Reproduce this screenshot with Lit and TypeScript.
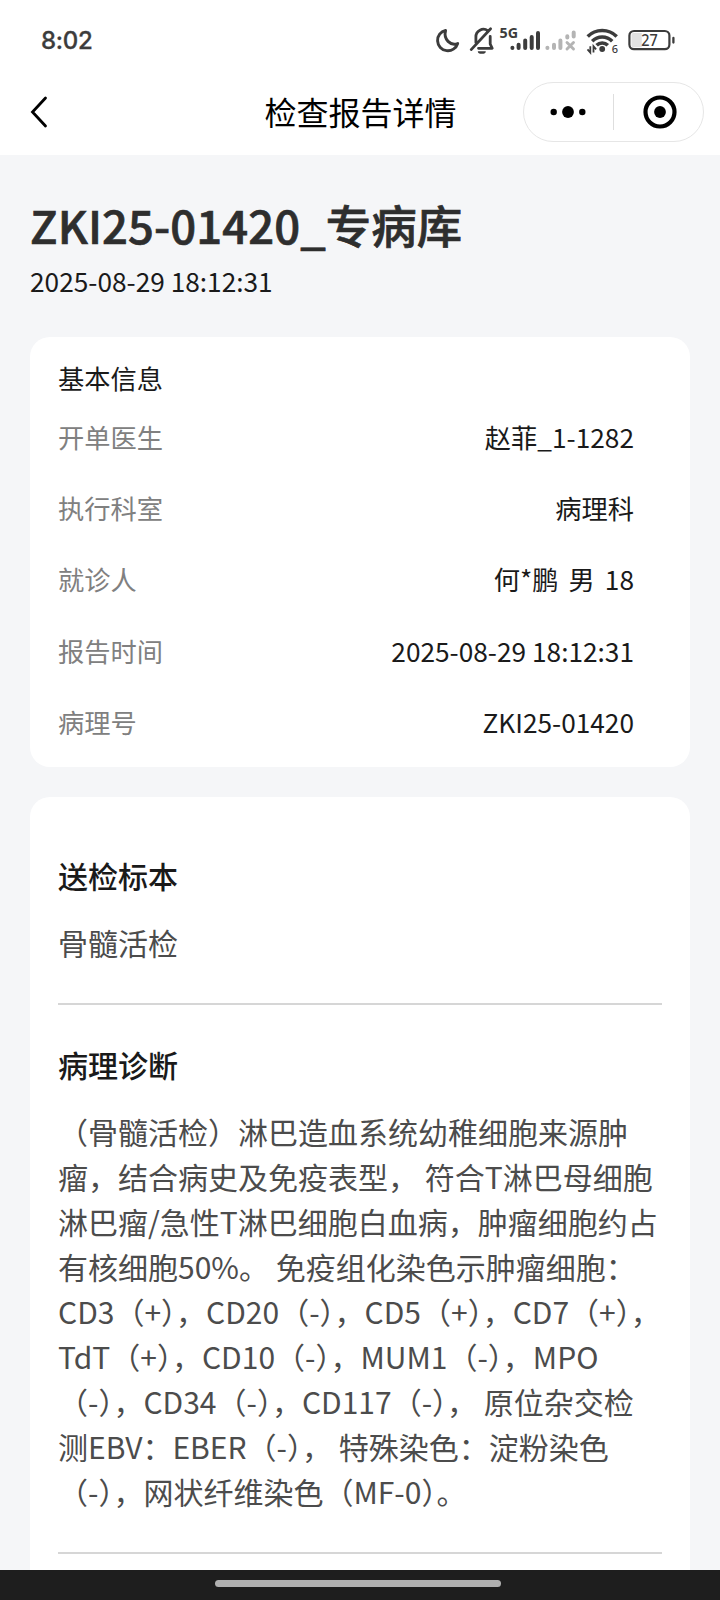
import { LitElement, html, css } from "lit";
import { customElement } from "lit/decorators.js";

const INFO: [string, string[]][] = [
  ["开单医生", ["赵菲_1-1282"]],
  ["执行科室", ["病理科"]],
  ["就诊人", ["何*鹏", "男", "18"]],
  ["报告时间", ["2025-08-29 18:12:31"]],
  ["病理号", ["ZKI25-01420"]],
];

const DIAGNOSIS =
  "（骨髓活检）淋巴造血系统幼稚细胞来源肿瘤，结合病史及免疫表型， 符合T淋巴母细胞淋巴瘤/急性T淋巴细胞白血病，肿瘤细胞约占有核细胞50%。 免疫组化染色示肿瘤细胞：CD3（+），CD20（-），CD5（+），CD7（+），TdT（+），CD10（-），MUM1（-），MPO（-），CD34（-），CD117（-）， 原位杂交检测EBV：EBER（-）， 特殊染色：淀粉染色（-），网状纤维染色（MF-0）。";

@customElement("status-bar")
class StatusBar extends LitElement {
  static styles = css`
    :host {
      display: flex;
      height: 80px;
      align-items: center;
      justify-content: space-between;
      padding: 0 44px 0 41px;
      box-sizing: border-box;
      color: #3c3c3c;
    }
    .time {
      font: 500 24px/34px "Inter", sans-serif;
      letter-spacing: -0.3px;
      padding-top: 2px;
      -webkit-text-stroke: 0.3px #3c3c3c;
    }
    svg {
      display: block;
    }
    .net {
      font: 700 13.500px "Noto Sans", sans-serif;
    }
    .six {
      font: 500 11px "Noto Sans", sans-serif;
    }
    .pct {
      font: 500 16px "Noto Sans", sans-serif;
    }
  `;
  render() {
    return html`<span class="time">8:02</span>
      <svg width="242" height="40" viewBox="434 20 242 40" fill="none" stroke="#3c3c3c">
        <path
          d="M445.6 30.400A10.300 10.300 0 1 0 457.700 43.500C450.500 46.200 443.200 39.500 445.600 30.400z"
          stroke-width="2.900"
          stroke-linejoin="round"
        />
        <path
          d="M490.200 36.500V44l2 4.300H478.500M475.900 42.500V37a7.500 7.500 0 0 1 12-6.200M471.200 49.600L490.600 28.800"
          stroke-width="2.800"
          stroke-linecap="round"
          stroke-linejoin="round"
        />
        <path d="M477.800 51.200h8a4 2.600 0 0 1-8 0z" fill="#3c3c3c" stroke="none" />
        <text class="net" x="499.500" y="37.800" textLength="18.500" lengthAdjust="spacingAndGlyphs" fill="#3c3c3c" stroke="none">5G</text>
        <path
          d="M512.400 48v-.300M518.600 48v-3.300M525.200 48v-7.500M531.700 48v-11M538 48v-15"
          stroke-width="4"
          stroke-linecap="round"
        />
        <g stroke="#b4b4b4" stroke-linecap="round">
          <path
            d="M547.400 48v-.300M554 48v-3.300M560.400 48v-7.500M567.300 37.500v-1.300M573.700 36.600v-4"
            stroke-width="4"
          />
          <path d="M567 42.500l6.500 6.500M573.500 42.500l-6.500 6.500" stroke-width="2.900" />
        </g>
        <g stroke-width="3.500">
          <path d="M587.700 36.400a20.500 20.500 0 0 1 29 0" />
          <path d="M592.200 41.200a14 14 0 0 1 20 0" />
          <path d="M596.600 45.300a7.800 7.800 0 0 1 11.200 0" />
        </g>
        <circle cx="602.200" cy="49" r="2.900" fill="#3c3c3c" stroke="none" />
        <path d="M590.300 46.200v6.300l-2.800-3.200M593.500 52.500v-6.300l2.600 3.200" stroke-width="1.800" />
        <text class="six" x="611.700" y="52.600" fill="#3c3c3c" stroke="none">6</text>
        <rect x="629.400" y="31" width="40" height="18.200" rx="4.600" stroke-width="2.200" />
        <path d="M633.500 33h8.300v14.200h-8.300a2 2 0 0 1-2-2V35a2 2 0 0 1 2-2z" fill="#e2e2e2" stroke="none" />
        <text class="pct" x="641.200" y="46.200" textLength="16.500" lengthAdjust="spacingAndGlyphs" fill="#3c3c3c" stroke="none">27</text>
        <path d="M673.400 38v4.600" stroke-width="2.300" stroke-linecap="round" />
      </svg>`;
  }
}

@customElement("nav-bar")
class NavBar extends LitElement {
  static styles = css`
    :host {
      display: grid;
      grid-template-columns: 197px 1fr 197px;
      align-items: center;
      height: 75px;
      padding-bottom: 11px;
      box-sizing: border-box;
      color: #000;
    }
    .back {
      margin-left: 27.500px;
      display: block;
    }
    .title {
      text-align: center;
      font-size: 32px;
      line-height: 48px;
      padding: 0 0 3px 1px;
    }
    .capsule {
      display: flex;
      align-items: center;
      box-sizing: border-box;
      width: 181px;
      height: 60px;
      border: 1px solid #e6e6e6;
      border-radius: 30px;
    }
    .half {
      flex: 1;
      display: flex;
      justify-content: center;
    }
    .half + .sep + .half {
      padding-left: 2px;
    }
    .sep {
      width: 1px;
      height: 36px;
      background: #dedede;
    }
    .half:first-child {
      padding-right: 2px;
    }
  `;
  render() {
    return html`<svg class="back" width="20" height="34" viewBox="0 0 20 34">
        <path
          d="M17.500 3L4.500 17 17.500 31"
          fill="none"
          stroke="#000"
          stroke-width="2.800"
          stroke-linecap="round"
        />
      </svg>
      <div class="title">检查报告详情</div>
      <div class="capsule">
        <div class="half">
          <svg width="36" height="12" viewBox="0 0 36 12">
            <circle cx="3.700" cy="6" r="3.200" />
            <circle cx="18" cy="6" r="5.900" />
            <circle cx="32.300" cy="6" r="3.200" />
          </svg>
        </div>
        <div class="sep"></div>
        <div class="half">
          <svg width="34" height="34" viewBox="0 0 34 34">
            <circle cx="17" cy="17" r="14.500" fill="none" stroke="#000" stroke-width="4.200" />
            <circle cx="17" cy="17" r="5.900" />
          </svg>
        </div>
      </div>`;
  }
}

@customElement("app-root")
class AppRoot extends LitElement {
  static styles = css`
    :host {
      display: flex;
      flex-direction: column;
      height: 1600px;
      overflow: hidden;
      background: #fff;
      font-family: "Noto Sans CJK SC", sans-serif;
      color: #1a1a1a;
    }
    .page {
      flex: 1;
      min-height: 0;
      overflow: hidden;
      background: #f5f6f8;
      padding: 36px 30px 0;
    }
    h1 {
      margin: 0;
      font-size: 45.400px;
      line-height: 66px;
      font-weight: 500;
      letter-spacing: 0.1px;
      color: #2e2e2e;
      -webkit-text-stroke: 0.7px #2e2e2e;
    }
    .date {
      font-size: 26.250px;
      line-height: 39px;
      margin-top: 5px;
    }
    .card {
      background: #fff;
      border-radius: 20px;
      padding: 0 28px;
    }
    .info {
      margin-top: 36px;
      height: 430px;
      padding-top: 22px;
      box-sizing: border-box;
      font-size: 26.250px;
      line-height: 39px;
    }
    .row {
      display: flex;
      justify-content: space-between;
      padding-right: 28px;
      height: 71.200px;
    }
    .first {
      height: 59px;
    }
    .label {
      color: #808080;
    }
    .value {
      display: flex;
      gap: 10px;
    }
    .detail {
      margin-top: 30px;
      padding-top: 19px;
      height: 900px;
      font-size: 30px;
      line-height: 45px;
    }
    .section {
      padding: 37px 0 38px;
      border-bottom: 2px solid #d6d6d6;
    }
    h2 {
      margin: 0 0 22px;
      font-size: 30px;
      line-height: 45px;
      font-weight: 500;
    }
    p {
      margin: 0;
      color: #4c4c4c;
    }
    .home {
      height: 30px;
      display: flex;
      justify-content: center;
      align-items: flex-start;
      padding: 10px 4px 0 0;
      box-sizing: border-box;
      background: #1e1e1e;
    }
    .pill {
      width: 286px;
      height: 7px;
      border-radius: 4px;
      background: #b0b0b0;
    }
  `;
  render() {
    return html`<status-bar></status-bar>
      <nav-bar></nav-bar>
      <main class="page">
        <h1>ZKI25-01420_专病库</h1>
        <div class="date">2025-08-29 18:12:31</div>
        <section class="card info">
          <div class="first">基本信息</div>
          ${INFO.map(
            ([label, parts]) => html`<div class="row">
              <span class="label">${label}</span>
              <span class="value">${parts.map((part) => html`<span>${part}</span>`)}</span>
            </div>`
          )}
        </section>
        <section class="card detail">
          <div class="section">
            <h2>送检标本</h2>
            <p>骨髓活检</p>
          </div>
          <div class="section">
            <h2>病理诊断</h2>
            <p>${DIAGNOSIS}</p>
          </div>
        </section>
      </main>
      <div class="home"><div class="pill"></div></div>`;
  }
}
